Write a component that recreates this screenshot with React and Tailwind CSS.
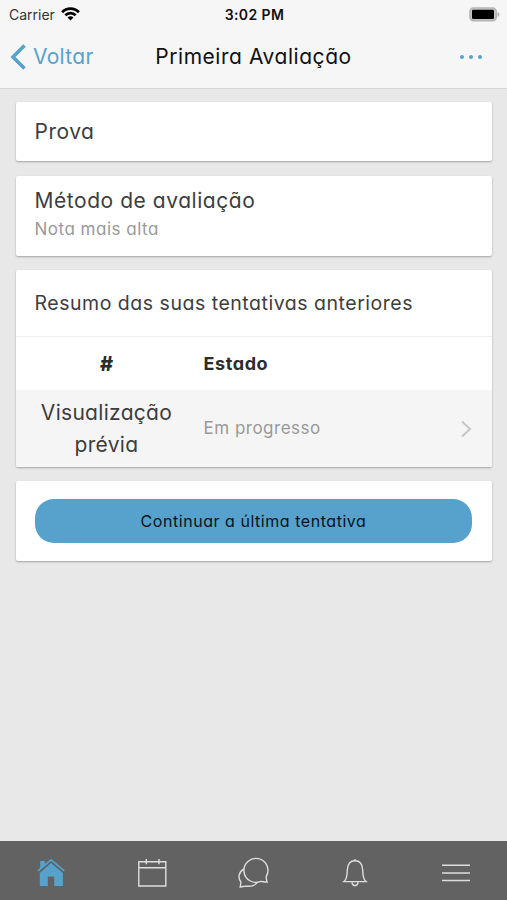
function Card({ className = "", children }) {
  return (
    <section className={`overflow-hidden rounded-[2px] bg-white shadow-[0_1px_2px_rgba(0,0,0,0.3)] ${className}`}>
      {children}
    </section>
  );
}

function StatusBar() {
  return (
    <div className="flex h-7 items-center justify-between pl-[9px] pr-[7px] text-[14px] text-[#111] [font-feature-settings:normal]">
      <div className="flex w-[120px] items-center gap-[6px]">
        <span className="text-[#333]">Carrier</span>
        <svg width="19" height="14" viewBox="0 0 19 14" fill="none" stroke="#000" strokeWidth="2.7">
          <path d="M1.1 5.2C5.8.3 13.2.3 17.9 5.2" />
          <path d="M4.3 8.3c2.9-2.9 7.5-2.9 10.4 0" />
          <path d="M6.5 10.5c1.7-1.6 4.3-1.6 6 0l-3 3z" fill="#000" stroke="none" />
        </svg>
      </div>
      <span className="font-semibold tracking-[0.4px]">3:02 PM</span>
      <div className="flex w-[120px] justify-end">
        <svg width="31" height="15" viewBox="0 0 31 15">
          <rect x="0.9" y="0.9" width="26.4" height="12.8" rx="3.6" fill="#c4c4c4" stroke="#b4b4b4" strokeWidth="1.4" />
          <rect x="3" y="2.8" width="22" height="9.2" rx="1.2" fill="#000" />
          <path d="M28.5 5v5c2.5-1 2.5-4 0-5z" fill="#b4b4b4" />
        </svg>
      </div>
    </div>
  );
}

function Header() {
  return (
    <header className="h-[89px] shrink-0 border-b border-[#d6d6d6] bg-[#f6f6f6]">
      <StatusBar />
      <div className="grid h-[58px] grid-cols-[120px_1fr_120px] items-center">
        <button className="flex items-center gap-[7px] pl-[10px] text-[21px] tracking-[0.3px] text-[#56a2cc]">
          <svg width="16" height="26" viewBox="0 0 16 26" fill="none" stroke="#56a2cc" strokeWidth="3.6">
            <path d="M14.5 1.5 3 13l11.5 11.5" />
          </svg>
          <span>Voltar</span>
        </button>
        <h1 className="text-center text-[21px] tracking-[0.55px] whitespace-nowrap text-[#111]">Primeira Avaliação</h1>
        <button className="flex justify-end gap-[4.5px] pr-[25px]">
          <span className="size-[4.5px] rounded-full bg-[#56a2cc]" />
          <span className="size-[4.5px] rounded-full bg-[#56a2cc]" />
          <span className="size-[4.5px] rounded-full bg-[#56a2cc]" />
        </button>
      </div>
    </header>
  );
}

function TabBar() {
  return (
    <nav className="grid h-[59px] shrink-0 grid-cols-5 items-center justify-items-center bg-[#626262] pt-[4px] text-[#dedede]">
      {/* Home */}
      <svg width="30" height="30" viewBox="0 0 30 30">
        <path d="M3.8 15 15.100 5l11.800 10v13H18.200v-9.500h-6.400V28h-8z" fill="#56a2cc" />
        <path d="M4.200 3h4.600v5L4.200 12z" fill="#56a2cc" />
        <path d="m2 12.800 13.100-11 13.200 11" fill="none" stroke="#56a2cc" strokeWidth="1.600" />
        <path d="m2.800 14.200 12.300-10.300L27.500 14.200" fill="none" stroke="#59626a" strokeWidth="0.900" />
      </svg>
      {/* Calendar */}
      <svg width="30" height="30" viewBox="0 0 30 30" fill="none" stroke="currentColor" strokeWidth="1.400">
        <path d="M1.800 3.800h27v24.200h-27zM1.800 9.800h27M9.300 1v5.300M22 1v5.300" />
      </svg>
      {/* Messages */}
      <svg width="32" height="32" viewBox="0 0 32 32" fill="none" stroke="currentColor" strokeWidth="1.400">
        <path d="M29.300 19.400A12 12 0 1 0 23.700 24.400c2-.1 3.700.9 6.500.6-.8-1.700-1-3.500-.9-5.600z" />
        <path d="M6.800 11.800C1.200 15.500 1 21 3.700 24.700c.3 1.800-.1 3.400-.5 5.300 2.600-.2 4-.9 5.700-.9 5.200.6 9.500-.7 11.800-4.200" />
      </svg>
      {/* Notifications */}
      <svg width="26" height="30" viewBox="0 0 26 30" fill="none" stroke="currentColor" strokeWidth="1.400">
        <path d="M2 23.600c3.500-3 3-7.300 3.300-11.800C5.600 6.100 8 2.700 13 2.700s7.400 3.400 7.700 9.100c.3 4.500-.2 8.800 3.300 11.800z" />
        <path d="M10 24.300c.2 4.500 5.800 4.500 6 0M13 1v2" />
      </svg>
      {/* More */}
      <svg width="28" height="20" viewBox="0 0 28 20" stroke="currentColor" strokeWidth="1.500">
        <path d="M0 2.200h28M0 10h28M0 17.500h28" />
      </svg>
    </nav>
  );
}

export default function App() {
  return (
    <div className="flex h-screen w-full flex-col bg-[#e8e8e8] font-['Inter','Liberation_Sans',sans-serif] text-[#3d3d3d] [font-feature-settings:'cv11']">
      <Header />

      <main className="flex flex-1 flex-col gap-[14.5px] px-[15.5px] pt-[13px]">
        <Card className="flex h-[59px] items-center px-[19px] pt-px">
          <h2 className="text-[21px] tracking-[0.5px]">Prova</h2>
        </Card>

        <Card className="h-[80px] px-[19px] pt-[10px]">
          <h2 className="text-[21px] leading-[30px] tracking-[0.55px]">Método de avaliação</h2>
          <p className="text-[17px] leading-[26px] tracking-[0.5px] text-[#999]">Nota mais alta</p>
        </Card>

        <Card className="h-[196.5px]">
          <h2 className="flex h-[67px] items-center border-b border-[#eee] px-[19px] pt-px text-[19.5px] tracking-[0.52px]">
            Resumo das suas tentativas anteriores
          </h2>
          <div className="grid h-[53px] grid-cols-[182px_1fr] items-center text-[18px] font-bold text-[#2c2c2c]">
            <span className="text-center text-[20px] leading-6 font-extrabold">#</span>
            <span className="pl-[6px] tracking-[0.6px]">Estado</span>
          </div>
          <div className="grid h-[77px] grid-cols-[182px_1fr_32px] items-center bg-[#f5f5f5]">
            <span className="text-center text-[21px] leading-8 tracking-[0.3px]">Visualização prévia</span>
            <span className="pt-px pl-[6px] text-[17px] tracking-[0.5px] text-[#999]">Em progresso</span>
            <svg width="12" height="18" viewBox="0 0 12 18" fill="none" stroke="#c6c6c6" strokeWidth="2">
              <path d="m2 1.500 8 7.500-8 7.500" />
            </svg>
          </div>
        </Card>

        <Card className="h-[80px] px-[19.500px] pt-[17.500px]">
          <button className="block h-[44.500px] w-full rounded-[19px] bg-[#56a2cc] text-[16px] tracking-[0.54px] text-[#0b1318]">
            Continuar a última tentativa
          </button>
        </Card>
      </main>

      <TabBar />
    </div>
  );
}
